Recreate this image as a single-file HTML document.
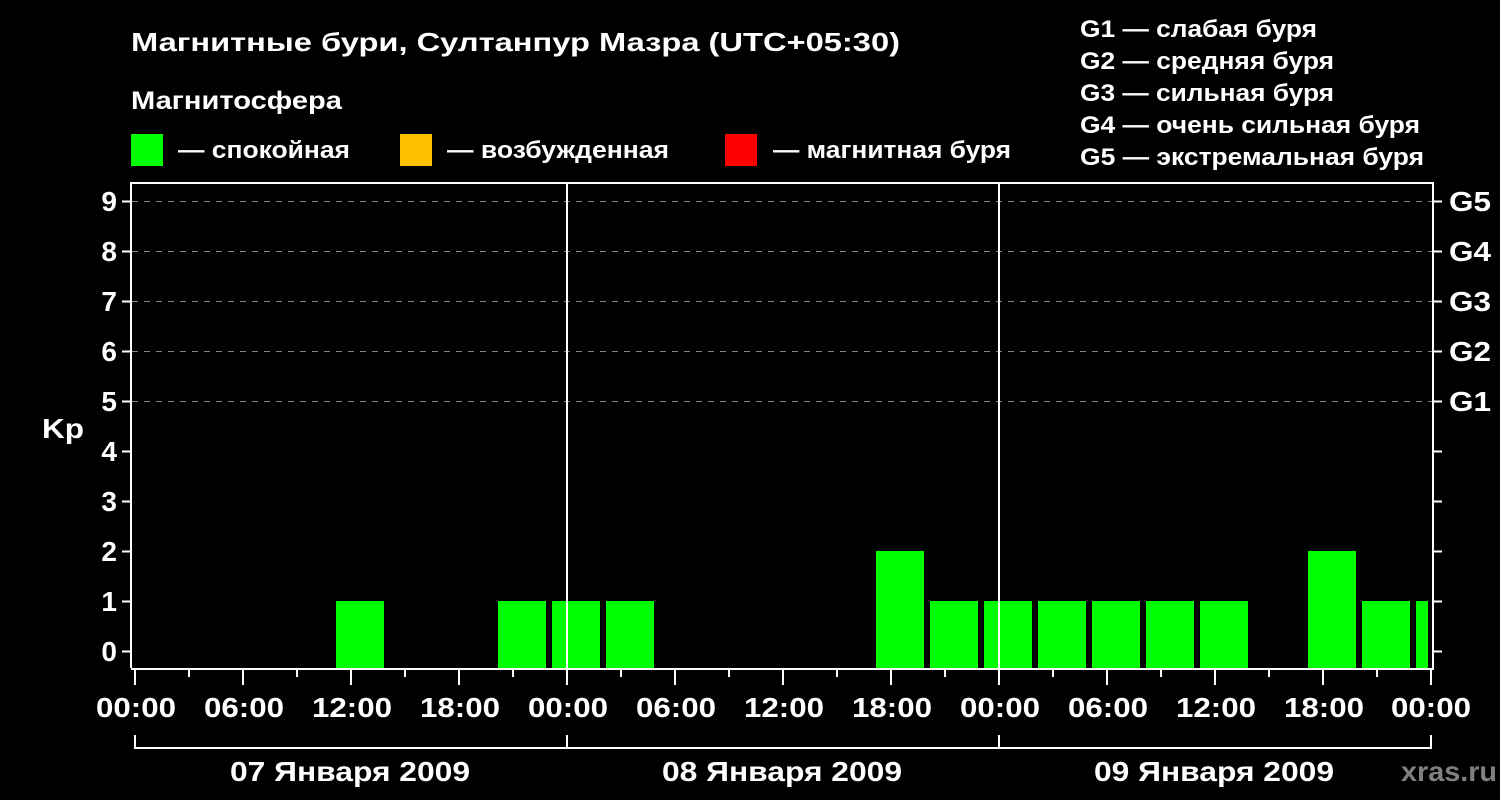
<!DOCTYPE html>
<html><head><meta charset="utf-8"><style>
html,body{margin:0;padding:0;background:#000;}
svg{display:block;font-family:"Liberation Sans","DejaVu Sans",sans-serif;font-weight:bold;}
</style></head><body>
<svg width="1500" height="800" viewBox="0 0 1500 800" xmlns="http://www.w3.org/2000/svg">
<rect width="1500" height="800" fill="#000"/>
<g fill="#fff" lengthAdjust="spacingAndGlyphs">
<text x="131" y="51" font-size="26" textLength="769" lengthAdjust="spacingAndGlyphs">Магнитные бури, Султанпур Мазра (UTC+05:30)</text>
<text x="131" y="109" font-size="25" textLength="211" lengthAdjust="spacingAndGlyphs">Магнитосфера</text>
<text x="178" y="158" font-size="24" textLength="172" lengthAdjust="spacingAndGlyphs">— спокойная</text>
<text x="447" y="158" font-size="24" textLength="222" lengthAdjust="spacingAndGlyphs">— возбужденная</text>
<text x="773" y="158" font-size="24" textLength="238" lengthAdjust="spacingAndGlyphs">— магнитная буря</text>
<text x="1080" y="37" font-size="24" textLength="237" lengthAdjust="spacingAndGlyphs">G1 — слабая буря</text>
<text x="1080" y="69" font-size="24" textLength="254" lengthAdjust="spacingAndGlyphs">G2 — средняя буря</text>
<text x="1080" y="101" font-size="24" textLength="254" lengthAdjust="spacingAndGlyphs">G3 — сильная буря</text>
<text x="1080" y="133" font-size="24" textLength="340" lengthAdjust="spacingAndGlyphs">G4 — очень сильная буря</text>
<text x="1080" y="165" font-size="24" textLength="344" lengthAdjust="spacingAndGlyphs">G5 — экстремальная буря</text>
</g>
<rect x="131" y="134" width="32" height="32" fill="#00ff00"/>
<rect x="400" y="134" width="32" height="32" fill="#ffc000"/>
<rect x="725" y="134" width="32" height="32" fill="#ff0000"/>
<g stroke="#888" stroke-width="1" stroke-dasharray="6,6">
<line x1="132" y1="201.5" x2="1432" y2="201.5"/>
<line x1="132" y1="251.5" x2="1432" y2="251.5"/>
<line x1="132" y1="301.5" x2="1432" y2="301.5"/>
<line x1="132" y1="351.5" x2="1432" y2="351.5"/>
<line x1="132" y1="401.5" x2="1432" y2="401.5"/>
</g>
<g fill="#00ff00">
<rect x="336" y="601" width="48" height="67"/>
<rect x="498" y="601" width="48" height="67"/>
<rect x="552" y="601" width="48" height="67"/>
<rect x="606" y="601" width="48" height="67"/>
<rect x="876" y="551" width="48" height="117"/>
<rect x="930" y="601" width="48" height="67"/>
<rect x="984" y="601" width="48" height="67"/>
<rect x="1038" y="601" width="48" height="67"/>
<rect x="1092" y="601" width="48" height="67"/>
<rect x="1146" y="601" width="48" height="67"/>
<rect x="1200" y="601" width="48" height="67"/>
<rect x="1308" y="551" width="48" height="117"/>
<rect x="1362" y="601" width="48" height="67"/>
<rect x="1416" y="601" width="12" height="67"/>
</g>
<g stroke="#fff" stroke-width="2" fill="none">
<path d="M131 668 V183 H1433 V669 H131"/>
<line x1="567" y1="183" x2="567" y2="668"/>
<line x1="999" y1="183" x2="999" y2="668"/>
<path d="M122 201.5H131M122 251.5H131M122 301.5H131M122 351.5H131M122 401.5H131M122 451.5H131M122 501.5H131M122 551.5H131M122 601.5H131M122 651.5H131"/>
<path d="M1433 201.5H1442M1433 251.5H1442M1433 301.5H1442M1433 351.5H1442M1433 401.5H1442M1433 451.5H1442M1433 501.5H1442M1433 551.5H1442M1433 601.5H1442M1433 651.5H1442"/>
<path d="M135 669V685M243 669V685M351 669V685M459 669V685M567 669V685M675 669V685M783 669V685M891 669V685M999 669V685M1107 669V685M1215 669V685M1323 669V685M1431 669V685"/>
<path d="M189 669V677M297 669V677M405 669V677M513 669V677M621 669V677M729 669V677M837 669V677M945 669V677M1053 669V677M1161 669V677M1269 669V677M1377 669V677"/>
<path d="M135 735V748H1431V735M567 735V748M999 735V748"/>
</g>
<g fill="#fff" font-size="28" text-anchor="end">
<text x="117" y="211">9</text><text x="117" y="261">8</text><text x="117" y="311">7</text><text x="117" y="361">6</text><text x="117" y="411">5</text><text x="117" y="461">4</text><text x="117" y="511">3</text><text x="117" y="561">2</text><text x="117" y="611">1</text><text x="117" y="661">0</text>
</g>
<text x="42" y="438" fill="#fff" font-size="28" textLength="42" lengthAdjust="spacingAndGlyphs">Kp</text>
<g fill="#fff" font-size="28">
<text x="1449" y="211" textLength="42" lengthAdjust="spacingAndGlyphs">G5</text><text x="1449" y="261" textLength="42" lengthAdjust="spacingAndGlyphs">G4</text><text x="1449" y="311" textLength="42" lengthAdjust="spacingAndGlyphs">G3</text><text x="1449" y="361" textLength="42" lengthAdjust="spacingAndGlyphs">G2</text><text x="1449" y="411" textLength="42" lengthAdjust="spacingAndGlyphs">G1</text>
</g>
<g fill="#fff" font-size="28" text-anchor="middle">
<text x="136" y="717" textLength="80" lengthAdjust="spacingAndGlyphs">00:00</text><text x="244" y="717" textLength="80" lengthAdjust="spacingAndGlyphs">06:00</text><text x="352" y="717" textLength="80" lengthAdjust="spacingAndGlyphs">12:00</text><text x="460" y="717" textLength="80" lengthAdjust="spacingAndGlyphs">18:00</text>
<text x="568" y="717" textLength="80" lengthAdjust="spacingAndGlyphs">00:00</text><text x="676" y="717" textLength="80" lengthAdjust="spacingAndGlyphs">06:00</text><text x="784" y="717" textLength="80" lengthAdjust="spacingAndGlyphs">12:00</text><text x="892" y="717" textLength="80" lengthAdjust="spacingAndGlyphs">18:00</text>
<text x="1000" y="717" textLength="80" lengthAdjust="spacingAndGlyphs">00:00</text><text x="1108" y="717" textLength="80" lengthAdjust="spacingAndGlyphs">06:00</text><text x="1216" y="717" textLength="80" lengthAdjust="spacingAndGlyphs">12:00</text><text x="1324" y="717" textLength="80" lengthAdjust="spacingAndGlyphs">18:00</text>
<text x="1431" y="717" textLength="80" lengthAdjust="spacingAndGlyphs">00:00</text>
<text x="350" y="781" textLength="240" lengthAdjust="spacingAndGlyphs">07 Января 2009</text>
<text x="782" y="781" textLength="240" lengthAdjust="spacingAndGlyphs">08 Января 2009</text>
<text x="1214" y="781" textLength="240" lengthAdjust="spacingAndGlyphs">09 Января 2009</text>
</g>
<text x="1401" y="781" fill="#808080" font-size="28" textLength="96" lengthAdjust="spacingAndGlyphs">xras.ru</text>
</svg>
</body></html>
